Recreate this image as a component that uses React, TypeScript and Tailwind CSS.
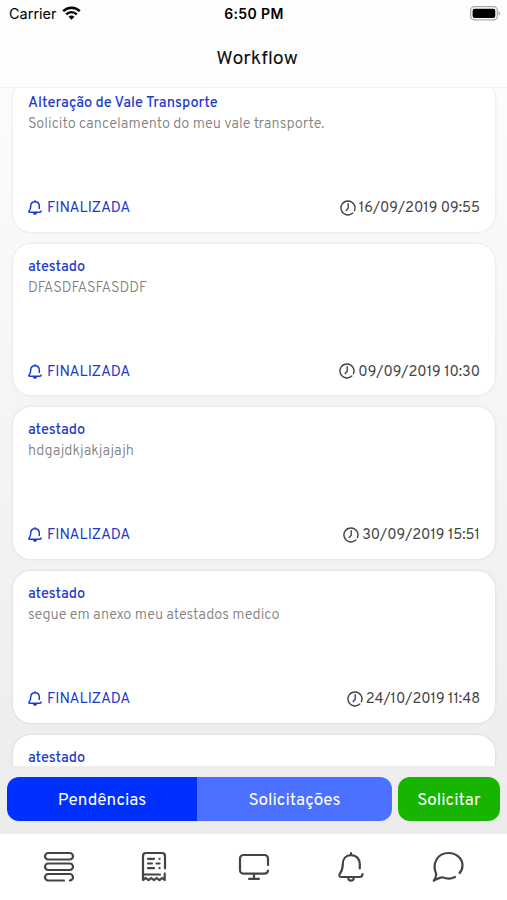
type IconProps = { className?: string };

type Request = {
    title: string;
    description?: string;
    date?: string;
};

const requests: Request[] = [
    { title: 'Alteração de Vale Transporte', description: 'Solicito cancelamento do meu vale transporte.', date: '16/09/2019 09:55' },
    { title: 'atestado', description: 'DFASDFASFASDDF', date: '09/09/2019 10:30' },
    { title: 'atestado', description: 'hdgajdkjakjajajh', date: '30/09/2019 15:51' },
    { title: 'atestado', description: 'segue em anexo meu atestados medico', date: '24/10/2019 11:48' },
    { title: 'atestado' },
];

function BellIcon({ className }: IconProps) {
    return (
        <svg className={className} viewBox="0 0 30 32" fill="none" stroke="currentColor" strokeWidth={2.200} strokeLinecap="round" strokeLinejoin="round">
            <path d="M15 2v2M23.800 17.500V13C23.800 7.800 20.200 4.200 15 4.200S6.800 7.800 6.800 13c0 5-1 7-2.800 9.500C2.800 24.500 3.300 26 5 26h18.500c1.800 0 3-1 3-3" />
            <path d="M12.300 27.200c.2 3.200 5.200 3.200 5.400 0" />
        </svg>
    );
}

function SmallBellIcon({ className }: IconProps) {
    return (
        <svg className={className} viewBox="0 0 14 15" fill="none" stroke="currentColor" strokeWidth={1.500} strokeLinecap="round" strokeLinejoin="round">
            <path d="M7 .8v.6M11.300 8.600V6.200C11.300 3.500 9.600 1.700 7 1.700S2.700 3.500 2.700 6.200c0 2.600-.5 3.600-1.600 4.800-.5.600-.2 1.200.6 1.200h10.200c.7 0 1.200-.4 1.200-1.100" />
            <path d="M5.700 13.100c.2 1.300 2.400 1.300 2.600 0z" fill="currentColor" />
        </svg>
    );
}

function ClockIcon({ className }: IconProps) {
    return (
        <svg className={className} viewBox="0 0 16 16" fill="none" stroke="currentColor" strokeWidth={1.400} strokeLinecap="round" strokeLinejoin="round">
            <path d="M14.400 10.700A7 7 0 1 0 12.800 13" />
            <path d="M8.200 3.800v4.500L6.200 10.400" />
        </svg>
    );
}

function StackIcon({ className }: IconProps) {
    return (
        <svg className={className} viewBox="0 0 32 32" fill="none" stroke="currentColor" strokeWidth={2.200} strokeLinecap="round" strokeLinejoin="round">
            <rect x="2" y="2" width="28" height="6.500" rx="3.250" />
            <rect x="2" y="12.500" width="28" height="6.500" rx="3.250" />
            <path d="M21 29.500H5.250a3.250 3.250 0 0 1 0-6.500h21.500a3.250 3.250 0 0 1 0 6.500" />
        </svg>
    );
}

function ReceiptIcon({ className }: IconProps) {
    return (
        <svg className={className} viewBox="0 0 26 32" fill="none" stroke="currentColor" strokeWidth={2.200} strokeLinecap="round" strokeLinejoin="round">
            <path d="M24 17.500V5a3 3 0 0 0-3-3H5a3 3 0 0 0-3 3v24l2.700-2 2.800 2.200 2.700-2.200 2.800 2.200 2.700-2.200 2.800 2.200 2.700-2.200 2.500 2v-6.500M2 23.500h17" />
            <path d="M7 7.800h6M7 12.500h4M7 17.200h6M18.500 7.800h.1M15.500 12.500h3.100M18.500 17.200h.1" />
        </svg>
    );
}

function MonitorIcon({ className }: IconProps) {
    return (
        <svg className={className} viewBox="0 0 32 32" fill="none" stroke="currentColor" strokeWidth={2.200} strokeLinecap="round" strokeLinejoin="round">
            <path d="M30 14V7.500a3.500 3.500 0 0 0-3.500-3.500h-21A3.500 3.500 0 0 0 2 7.500v11.700a3.500 3.500 0 0 0 3.500 3.500h21a3.500 3.500 0 0 0 3.500-3" />
            <path d="M16 23v4.500M11 27.800h10" />
        </svg>
    );
}

function ChatIcon({ className }: IconProps) {
    return (
        <svg className={className} viewBox="0 0 32 32" fill="none" stroke="currentColor" strokeWidth={2.200} strokeLinecap="round" strokeLinejoin="round">
            <path d="M23 26c-4 2.200-8.500 2-12.500.3-2.800-.2-5 1.600-8.700 3.400 1.600-2.700 3-4.800 2.200-7.200C-.2 12.500 5.500 2 16.500 2 24.500 2 30.500 7.500 30.500 14.500c0 2.900-1 5.400-2.900 7.500" />
        </svg>
    );
}

function StatusBar() {
    return (
        <div className="grid h-7 grid-cols-3 items-center pr-[6px] pl-[7px] font-['Inter',sans-serif] text-black">
            <div className="flex items-center gap-[5px]">
                <span className="pl-0.5 text-[14.500px] leading-7">Carrier</span>
                <svg className="-mt-0.5 h-[14px] w-[19px]" viewBox="0 0 19 14" fill="none" stroke="currentColor" strokeWidth={2.400}>
                    <path d="M1.200 5.200c4.700-4.700 11.900-4.700 16.600 0M4.200 8.400c3-3 7.600-3 10.600 0" />
                    <path d="M9.500 13.700 6.600 10.800c1.600-1.600 4.200-1.600 5.800 0z" fill="currentColor" stroke="none" />
                </svg>
            </div>
            <span className="text-center text-[14px] leading-7 font-semibold tracking-[0.400px]">6:50 PM</span>
            <svg className="-mt-0.5 h-[15px] w-[31px] justify-self-end" viewBox="0 0 31 15">
                <rect x="0.700" y="0.700" width="26.600" height="13.200" rx="3.800" fill="#fff" stroke="#aaa" strokeWidth={1.300} />
                <rect x="2.600" y="2.700" width="22.700" height="9.300" rx="2" fill="#000" />
                <path d="M28.700 5.200v4.400c1.800-.7 1.800-3.700 0-4.400" fill="#999" />
            </svg>
        </div>
    );
}

function RequestCard({ request }: { request: Request }) {
    return (
        <div className="flex h-[151.500px] shrink-0 flex-col rounded-[18px] bg-white px-[15px] pt-4 pb-[12.500px] shadow-[0_0_3px_rgba(0,0,0,0.12)]">
            <h2 className="text-[14.500px] leading-[15px] font-medium text-[#1d3cc9]">{request.title}</h2>
            <p className="mt-[3px] text-[14.500px] leading-[21px] font-light text-[#808080]">{request.description}</p>
            {request.date && (
                <div className="mt-auto flex items-center justify-between">
                    <div className="flex items-center gap-[5px] text-[#1d3cc9]">
                        <SmallBellIcon className="h-[15px] w-[14px]" />
                        <span className="pt-[3px] text-[14.800px] leading-[20px]">FINALIZADA</span>
                    </div>
                    <div className="flex items-center gap-[3px] text-[#444]">
                        <ClockIcon className="h-4 w-4" />
                        <span className="pt-[3px] text-[14.500px] leading-[20px]">{request.date}</span>
                    </div>
                </div>
            )}
        </div>
    );
}

export default function App() {
    return (
        <div className="flex h-[900px] w-[507px] flex-col overflow-hidden bg-[#ececec] font-['Overpass','Roboto',sans-serif]">
            <header className="h-[88px] shrink-0 border-b border-[#f3f3f3] bg-[#fdfdfd]">
                <StatusBar />
                <h1 className="pt-[18px] pl-[7px] text-center text-[19.700px] leading-7 text-[#111]">Workflow</h1>
            </header>

            <main className="flex min-h-0 flex-1 flex-col bg-linear-to-b from-[#fcfcfc] to-[#ececec]">
                <div className="h-[678px] overflow-hidden px-3">
                    <div className="-mt-2 flex flex-col gap-[12.200px] pl-px">
                        {requests.map((request, i) => (
                            <RequestCard key={i} request={request} />
                        ))}
                    </div>
                </div>

                {/* Request filters */}
                <div className="flex gap-[6px] px-[7px] pt-[11px] text-[17.100px] text-white">
                    <div className="flex h-[44px] w-[385px] overflow-hidden rounded-[12px]">
                        <button className="w-[190px] bg-[#0030ff] pt-[5px]">Pendências</button>
                        <button className="flex-1 bg-[#4c70ff] pt-[5px]">Solicitações</button>
                    </div>
                    <button className="h-[44px] flex-1 rounded-[12px] bg-[#17b500] pt-[5px]">Solicitar</button>
                </div>
            </main>

            <nav className="flex h-[66px] shrink-0 items-center bg-white pl-[43px] text-[#444]">
                <StackIcon className="h-8 w-8" />
                <ReceiptIcon className="ml-[66px] h-8 w-[26px]" />
                <MonitorIcon className="ml-[71px] h-8 w-8" />
                <BellIcon className="ml-[66px] h-8 w-[30px]" />
                <ChatIcon className="ml-[66px] h-8 w-8" />
            </nav>
        </div>
    );
}
